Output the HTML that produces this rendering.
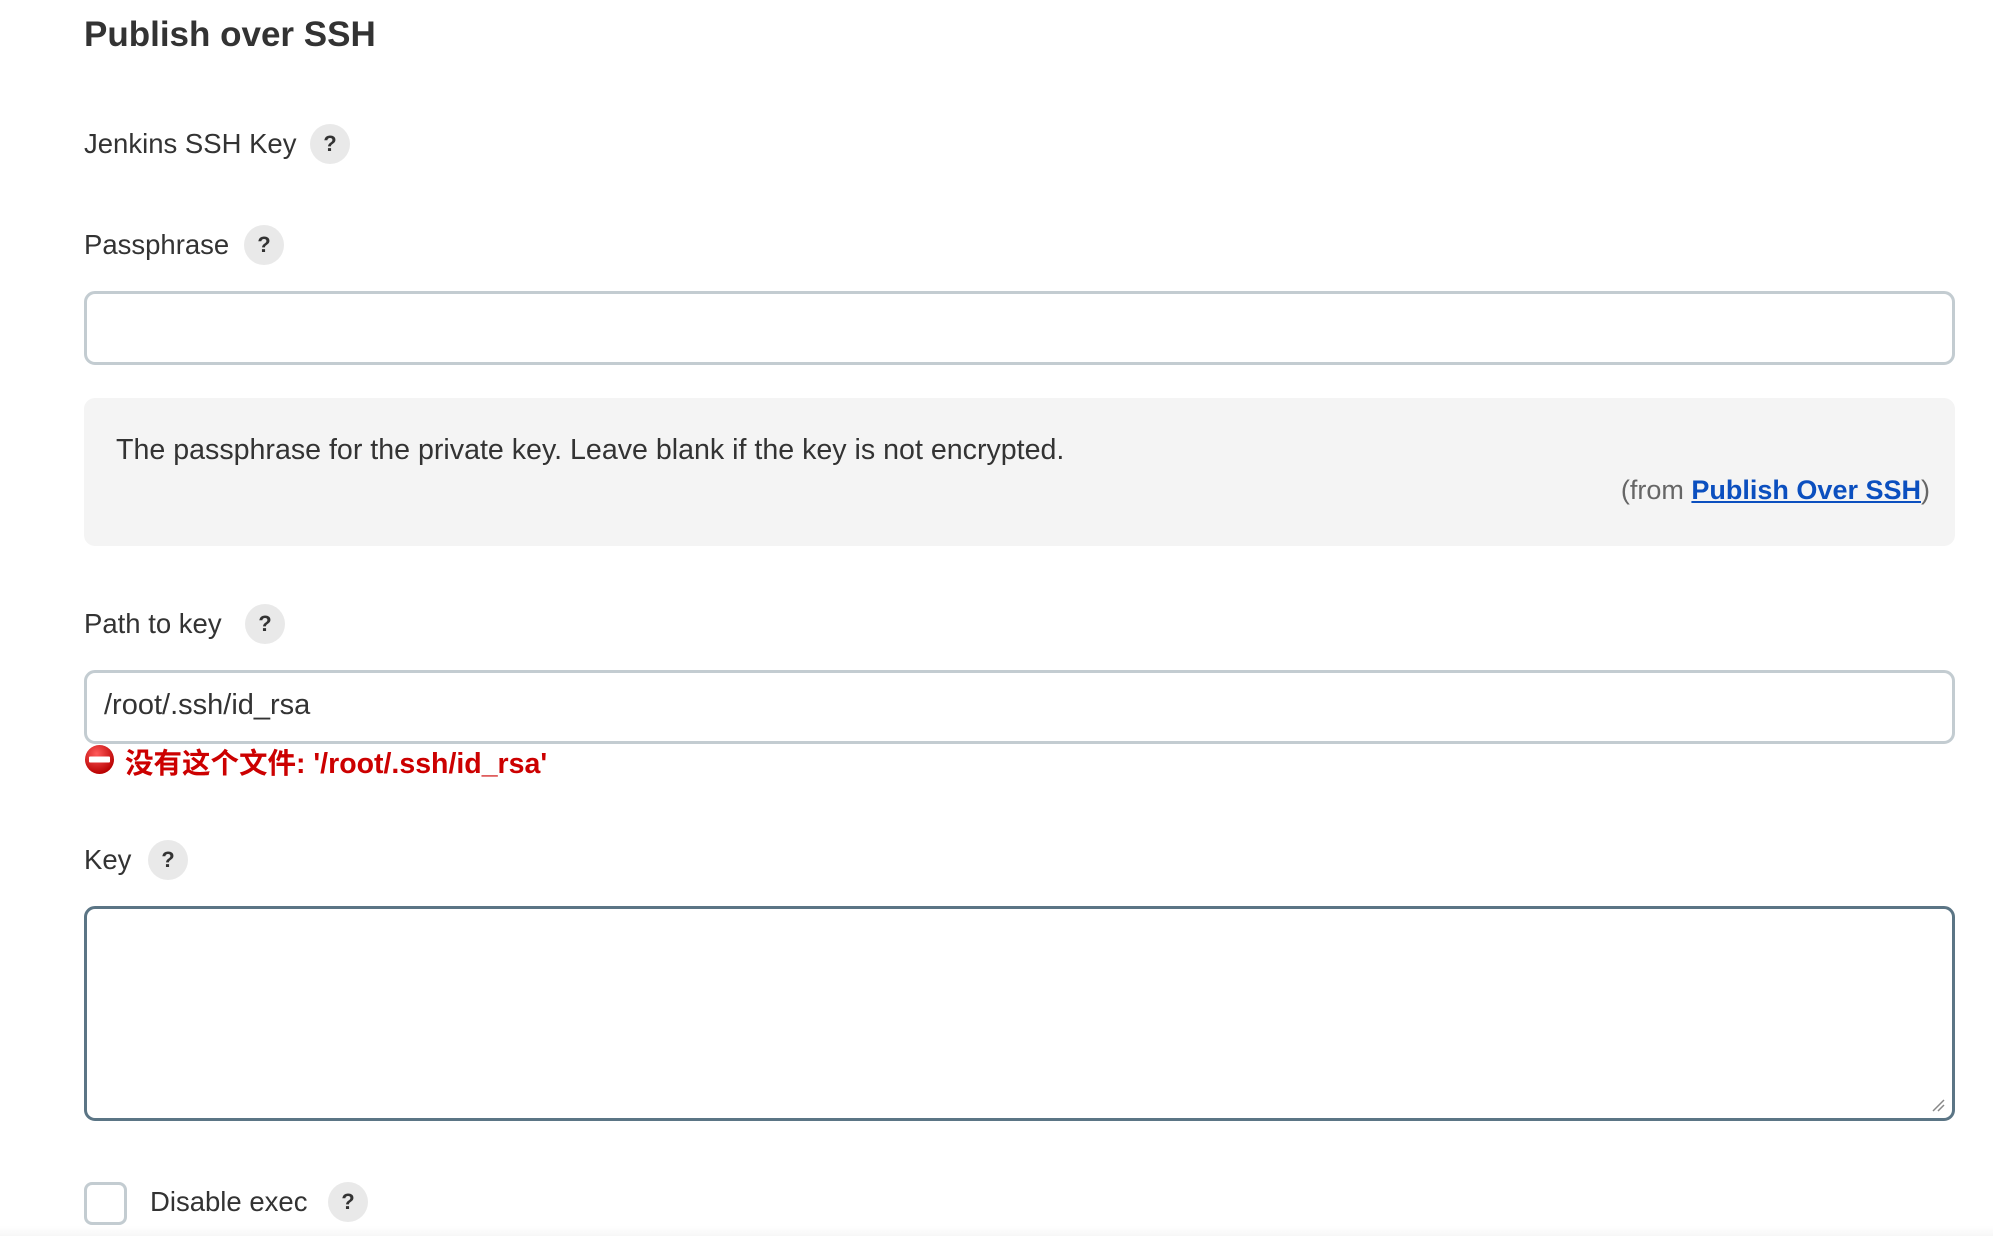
<!DOCTYPE html>
<html><head><meta charset="utf-8"><style>
body{margin:0;width:1993px;height:1236px;background:#fff;position:relative;overflow:hidden;font-family:"Liberation Sans","Noto Sans CJK SC",sans-serif;color:#333;}
.a{position:absolute;white-space:nowrap;}
.lbl{font-size:27.5px;line-height:40px;color:#333;}
.h{position:absolute;width:40px;height:40px;border-radius:50%;background:#e9e9e9;color:#333;font-weight:bold;font-size:22px;line-height:40px;text-align:center;}
.inp{position:absolute;left:84px;width:1865px;border:3px solid #c3ccd1;border-radius:11px;background:#fff;}
</style></head><body>
<div class="a" style="left:84px;top:15px;font-size:35px;font-weight:bold;color:#333;">Publish over SSH</div>

<div class="a lbl" style="left:84px;top:124px;">Jenkins SSH Key</div>
<div class="h" style="left:310px;top:124px;">?</div>

<div class="a lbl" style="left:84px;top:225px;">Passphrase</div>
<div class="h" style="left:244px;top:225px;">?</div>

<div class="inp" style="top:291px;height:68px;"></div>

<div class="a" style="left:84px;top:398px;width:1871px;height:148px;background:#f4f4f4;border-radius:11px;"></div>
<div class="a" style="left:116px;top:434px;font-size:28.6px;color:#333;">The passphrase for the private key. Leave blank if the key is not encrypted.</div>
<div class="a" style="right:63px;top:475px;font-size:27px;color:#666;">(from <a style="color:#0b4fbf;font-weight:bold;text-decoration:underline;">Publish Over SSH</a>)</div>

<div class="a lbl" style="left:84px;top:604px;">Path to key</div>
<div class="h" style="left:245px;top:604px;">?</div>

<div class="inp" style="top:670px;height:68px;"></div>
<div class="a" style="left:104px;top:689px;font-size:29px;color:#333;">/root/.ssh/id_rsa</div>

<svg class="a" style="left:84px;top:744px;" width="31" height="31" viewBox="0 0 31 31"><defs><radialGradient id="g" cx="40%" cy="30%" r="70%"><stop offset="0" stop-color="#ff5a5a"/><stop offset="1" stop-color="#b80000"/></radialGradient></defs><circle cx="15.5" cy="15.5" r="14.5" fill="url(#g)"/><rect x="5" y="12.5" width="21" height="6" rx="1" fill="#fff"/></svg>
<div class="a" style="left:125px;top:741px;font-size:28.5px;font-weight:bold;color:#cc0000;">没有这个文件: '/root/.ssh/id_rsa'</div>

<div class="a lbl" style="left:84px;top:840px;">Key</div>
<div class="h" style="left:148px;top:840px;">?</div>

<div class="a" style="left:84px;top:906px;width:1865px;height:209px;border:3px solid #5b7585;border-radius:11px;"></div>
<svg class="a" style="left:1931px;top:1098px;" width="14" height="14"><path d="M2 13 L13 2 M7 13 L13 7" stroke="#888" stroke-width="1.5"/></svg>

<div class="a" style="left:84px;top:1182px;width:37px;height:37px;border:3px solid #c3ccd1;border-radius:8px;"></div>
<div class="a lbl" style="left:150px;top:1182px;">Disable exec</div>
<div class="h" style="left:328px;top:1182px;">?</div>
<div class="a" style="left:0;top:1226px;width:1993px;height:10px;background:linear-gradient(rgba(255,255,255,0),#f7f7f7);"></div>
</body></html>
